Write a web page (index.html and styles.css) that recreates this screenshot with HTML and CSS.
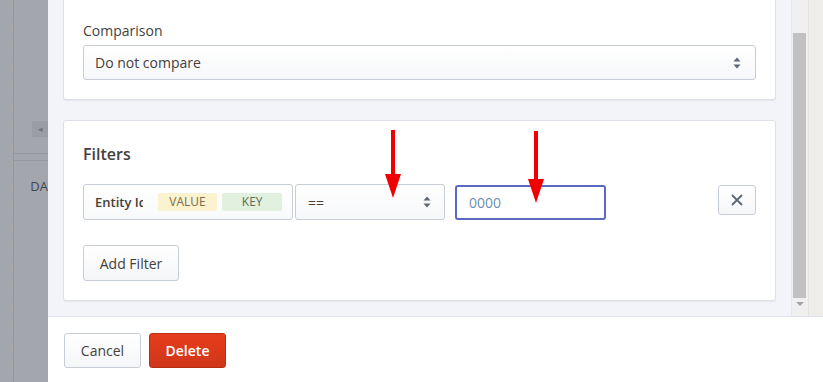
FILE: index.html
```html
<!DOCTYPE html>
<html lang="en">
  <head>
    <meta charset="UTF-8" />
    <meta name="viewport" content="width=device-width, initial-scale=1.0" />
    <title>Delete widget</title>
    <link rel="stylesheet" href="styles.css">
  </head>
  <body>
    <div class="screen">
      <div class="backdrop">
        <div class="hatch"></div>
        <div class="under">
          <div class="under-top">
            <span class="under-toggle">&#9666;</span>
          </div>
          <div class="under-panel">DA</div>
        </div>
      </div>

      <div class="modal">
        <div class="modal-body">
          <div class="content">
            <div class="card card-first">
              <label class="field-label">Comparison</label>
              <div class="select select-wide">
                <span>Do not compare</span>
                <svg class="caret" width="8" height="12" viewBox="0 0 8 12">
                  <path d="M4 0.5 L7.5 4.5 H0.5 Z M4 11.5 L7.5 7.5 H0.5 Z" fill="#5d6673" />
                </svg>
              </div>
            </div>

            <div class="card card-filters">
              <h3>Filters</h3>
              <div class="filter-row">
                <div class="entity">
                  <span class="entity-name">Entity Id</span>
                  <span class="tag tag-value">VALUE</span>
                  <span class="tag tag-key">KEY</span>
                </div>
                <div class="select select-op">
                  <span>==</span>
                  <svg class="caret" width="8" height="12" viewBox="0 0 8 12">
                    <path d="M4 0.5 L7.5 4.5 H0.5 Z M4 11.5 L7.5 7.5 H0.5 Z" fill="#5d6673" />
                  </svg>
                </div>
                <div class="value-input">0000</div>
                <button class="btn btn-remove" type="button">
                  <svg width="12" height="12" viewBox="0 0 12 12">
                    <path d="M1 1 L11 11 M11 1 L1 11" stroke="#5d6673" stroke-width="1.8" />
                  </svg>
                </button>
              </div>
              <button class="btn btn-add" type="button">Add Filter</button>

              <div class="arrow arrow-op"></div>
              <div class="arrow arrow-value"></div>
            </div>
          </div>
          <div class="scrollbar">
            <div class="thumb"></div>
            <span class="scroll-down"></span>
          </div>
          <div class="edge"></div>
        </div>

        <div class="modal-footer">
          <button class="btn btn-cancel" type="button">Cancel</button>
          <button class="btn btn-delete" type="button">Delete</button>
        </div>
      </div>
    </div>
  </body>
</html>
```

FILE: styles.css
```css
body {
  margin: 0;
  padding: 0;
  font-family: "Open Sans", "Noto Sans", sans-serif;
  font-size: 14px;
  color: #45403c;
  overflow: hidden;
}

.screen {
  display: flex;
  width: 823px;
  height: 382px;
}

/* page behind the modal, dimmed */
.backdrop {
  display: flex;
  width: 48px;
  flex-shrink: 0;
  background-color: #a3a6ac;
}

.hatch {
  width: 5px;
  margin-left: 11px;
  background: repeating-linear-gradient(
    -60deg,
    #a3a6ac 0,
    #a3a6ac 6px,
    #aba6a3 6px,
    #aba6a3 10px
  );
}

.under {
  flex: 1;
  display: flex;
  flex-direction: column;
  border-left: 1px solid #95989e;
}

.under-top {
  height: 153px;
  border-bottom: 1px solid #95989e;
  display: flex;
  justify-content: flex-end;
  align-items: flex-start;
}

.under-toggle {
  margin-top: 121px;
  width: 16px;
  height: 16px;
  background-color: #9a9da3;
  color: #6f7278;
  font-size: 9px;
  line-height: 16px;
  text-align: center;
}

.under-panel {
  margin-top: 6px;
  border-top: 1px solid #95989e;
  flex: 1;
  padding: 16px 0 0 16px;
  color: #3f4750;
  font-size: 13px;
  overflow: hidden;
  white-space: nowrap;
}

.modal {
  flex: 1;
  display: flex;
  flex-direction: column;
  background-color: #ffffff;
}

.modal-body {
  height: 317px;
  flex-shrink: 0;
  display: flex;
  background-color: #f2f4f9;
  border-bottom: 1px solid #dfe2e8;
  box-sizing: border-box;
}

.content {
  flex: 1;
  padding: 0 15px;
}

.card {
  position: relative;
  background-color: #ffffff;
  border: 1px solid #dde1e7;
  border-radius: 3px;
  box-shadow: 0 1px 1px rgba(0, 0, 0, 0.06);
  padding: 0 19px 19px 19px;
}

.card-first {
  margin-top: -9px;
  padding-top: 30px;
  border-top: none;
}

.field-label {
  display: block;
  line-height: 20px;
  margin-bottom: 4px;
}

.select {
  display: flex;
  align-items: center;
  justify-content: space-between;
  height: 35px;
  box-sizing: border-box;
  padding: 0 14px 0 11px;
  border: 1px solid #c7cdd6;
  border-radius: 3px;
  background: linear-gradient(#ffffff, #f6f7f9);
}

.card-filters {
  margin-top: 20px;
  padding-top: 20px;
  padding-bottom: 19px;
}

.card-filters h3 {
  margin: 0 0 17px 0;
  font-size: 16px;
  font-weight: 600;
  line-height: 26px;
}

.filter-row {
  display: flex;
  align-items: flex-start;
  margin-bottom: 25px;
}

.entity {
  display: flex;
  align-items: center;
  width: 210px;
  height: 36px;
  box-sizing: border-box;
  padding: 0 10px 0 11px;
  border: 1px solid #c7cdd6;
  border-radius: 3px;
  background: linear-gradient(#ffffff, #f8f9fa);
}

.entity-name {
  width: 48px;
  overflow: hidden;
  white-space: nowrap;
  font-size: 13px;
  font-weight: 600;
}

.tag {
  width: 60px;
  height: 18px;
  line-height: 18px;
  text-align: center;
  font-size: 12px;
  border-radius: 2px;
}

.tag-value {
  margin-left: 15px;
  background-color: #fbf2cf;
  color: #7b6c47;
}

.tag-key {
  margin-left: 5px;
  background-color: #e2f0df;
  color: #5d6d57;
}

.select-op {
  width: 150px;
  height: 36px;
  margin-left: 2px;
  padding-left: 12px;
  padding-right: 13px;
}

.value-input {
  width: 151px;
  height: 35px;
  box-sizing: border-box;
  margin: 1px 0 0 10px;
  padding: 0 12px;
  line-height: 31px;
  border: 2px solid #5c69c3;
  border-radius: 3px;
  color: #6e8fb6;
  background-color: #ffffff;
}

.btn {
  font-family: inherit;
  font-size: 14px;
  color: #45403c;
  border: 1px solid #c7cdd6;
  border-radius: 3px;
  background: linear-gradient(#ffffff, #f5f6f8);
  cursor: pointer;
}

.btn-remove {
  margin: 1px 0 0 auto;
  width: 38px;
  height: 30px;
  padding: 0;
  display: flex;
  align-items: center;
  justify-content: center;
}

.btn-add {
  width: 96px;
  height: 36px;
  padding: 0;
}

/* annotation arrows drawn on top of the form */
.arrow {
  position: absolute;
  width: 4px;
  background-color: #f00000;
}

.arrow::after {
  content: "";
  position: absolute;
  left: -6px;
  bottom: -22px;
  border-left: 8px solid transparent;
  border-right: 8px solid transparent;
  border-top: 24px solid #f00000;
}

.arrow-op {
  left: 327px;
  top: 9px;
  height: 46px;
}

.arrow-value {
  left: 470px;
  top: 10px;
  height: 50px;
}

.scrollbar {
  position: relative;
  width: 17px;
  background-color: #f0f0f0;
  border-left: 1px solid #e6e6e6;
  box-sizing: border-box;
}

.thumb {
  margin: 33px 0 0 1px;
  width: 13px;
  height: 265px;
  background-color: #c1c1c1;
}

.scroll-down {
  display: block;
  margin: 4px auto 0 auto;
  width: 0;
  height: 0;
  border-left: 4px solid transparent;
  border-right: 4px solid transparent;
  border-top: 4px solid #a3a3a3;
}

.edge {
  width: 14px;
  background-color: #efeeeb;
  border-left: 1px solid #e4e3e0;
}

.modal-footer {
  flex: 1;
  display: flex;
  align-items: flex-start;
  gap: 8px;
  padding: 16px 16px 0 16px;
}

.btn-cancel {
  width: 77px;
  height: 35px;
  padding: 0;
}

.btn-delete {
  width: 77px;
  height: 35px;
  padding: 0;
  color: #ffffff;
  font-weight: 600;
  border-color: #b8300f;
  background: linear-gradient(#e53d1c, #d0361a);
}
```
